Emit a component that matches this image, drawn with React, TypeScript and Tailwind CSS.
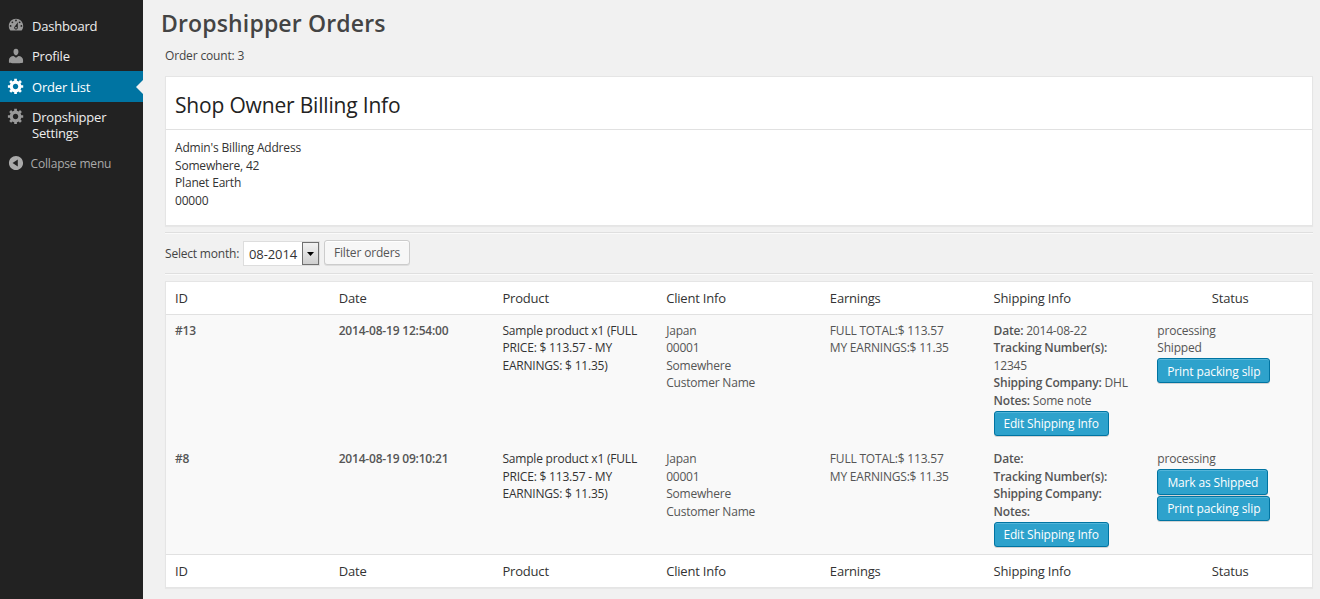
import React from 'react';

const GEAR =
  'M18 12h-2.18c-.17.7-.44 1.35-.81 1.93l1.54 1.54-2.1 2.1-1.54-1.54c-.58.36-1.23.63-1.91.79V19H8v-2.18c-.68-.16-1.33-.43-1.91-.79l-1.54 1.54-2.12-2.12 1.54-1.54c-.36-.58-.63-1.23-.79-1.91H1V9.03h2.17c.16-.7.44-1.35.8-1.94L2.43 5.55l2.1-2.1 1.54 1.54c.58-.37 1.24-.64 1.93-.81V2h3v2.18c.68.16 1.33.43 1.91.79l1.54-1.54 2.12 2.12-1.54 1.54c.36.59.64 1.24.8 1.94H18V12zm-8.5 1.5c1.66 0 3-1.34 3-3s-1.34-3-3-3-3 1.34-3 3 1.34 3 3 3z';
const DASH =
  'M3.76 16h12.48c1.1-1.37 1.76-3.11 1.76-5 0-4.42-3.58-8-8-8s-8 3.58-8 8c0 1.89.66 3.63 1.76 5zM10 4c.55 0 1 .45 1 1s-.45 1-1 1-1-.45-1-1 .45-1 1-1zM6 6c.55 0 1 .45 1 1s-.45 1-1 1-1-.45-1-1 .45-1 1-1zm8 0c.55 0 1 .45 1 1s-.45 1-1 1-1-.45-1-1 .45-1 1-1zm-5.370 5.550L12 7v6c0 1.100-.9 2-2 2s-2-.9-2-2c0-.57.24-1.080.63-1.450zM4 10c.55 0 1 .45 1 1s-.45 1-1 1-1-.45-1-1 .45-1 1-1zm12 0c.55 0 1 .45 1 1s-.45 1-1 1-1-.45-1-1 .45-1 1-1zm-5 3c0-.55-.45-1-1-1s-1 .45-1 1 .45 1 1 1 1-.45 1-1z';
const USER =
  'M10 9.250c-2.270 0-2.730-3.440-2.730-3.440C7 4.020 7.820 2 9.970 2c2.160 0 2.980 2.020 2.710 3.810 0 0-.41 3.440-2.680 3.440zm0 2.570L12.720 10c2.900 0 5.120 2.130 5.120 4.330v3.190s-4.250.63-7.840.63c-3.650 0-7.840-.63-7.840-.63v-3.190c0-2.250 2.240-4.280 5.070-4.280z';
const COLLAPSE =
  'M10 2.160c4.330 0 7.840 3.510 7.840 7.840s-3.510 7.840-7.840 7.840S2.160 14.330 2.160 10 5.710 2.160 10 2.160zm2 11.720V6.120L6.180 9.970z';

function Icon({ d, className = '' }: { d: string; className?: string }) {
  return (
    <svg viewBox="0 0 20 20" className={`size-[18px] shrink-0 fill-current ${className}`}>
      <path fillRule="evenodd" d={d} />
    </svg>
  );
}

function Button({ children, className = '' }: { children: React.ReactNode; className?: string }) {
  return (
    <button
      className={`block rounded-[3px] border border-[#0074a2] bg-[#2ea2cc] text-center text-[12px] whitespace-nowrap text-white shadow-[inset_0_1px_0_rgba(120,200,230,0.5),0_1px_0_rgba(0,0,0,0.15)] ${className}`}
    >
      {children}
    </button>
  );
}

const COLUMNS = ['ID', 'Date', 'Product', 'Client Info', 'Earnings', 'Shipping Info'];

function Headings() {
  return (
    <div className="grid h-[32px] grid-cols-7 bg-white text-[13px] leading-[33px] tracking-[-0.19px] text-[#333]">
      {COLUMNS.map((c) => (
        <div key={c} className="pl-[9px]">{c}</div>
      ))}
      <div className="text-center">Status</div>
    </div>
  );
}

type Order = {
  id: string;
  date: string;
  shipDate?: string;
  tracking?: string;
  company?: string;
  notes?: string;
  shipped: boolean;
};

const ORDERS: Order[] = [
  { id: '#13', date: '2014-08-19 12:54:00', shipDate: '2014-08-22', tracking: '12345', company: 'DHL', notes: 'Some note', shipped: true },
  { id: '#8', date: '2014-08-19 09:10:21', shipped: false },
];

function OrderRow({ o }: { o: Order }) {
  return (
    <div
      className={`grid grid-cols-7 text-[12px] leading-[17.5px] tracking-[-0.2px] text-[#555] *:pl-[9px] ${o.shipped ? 'h-[128px] pt-[6.6px]' : 'h-[111px] pt-[7.1px]'}`}
    >
      <div className="font-semibold">{o.id}</div>
      <div className="font-semibold">{o.date}</div>
      <div className="whitespace-nowrap text-[#333]">
        Sample product x1 (FULL<br />PRICE: $ 113.57 - MY<br />EARNINGS: $ 11.35)
      </div>
      <div>Japan<br />00001<br />Somewhere<br />Customer Name</div>
      <div className="whitespace-nowrap">FULL TOTAL:$ 113.57<br />MY EARNINGS:$ 11.35</div>
      <div className="whitespace-nowrap">
        <b className="font-semibold">Date:</b> {o.shipDate}<br />
        <b className="font-semibold">Tracking Number(s):</b><br />
        {o.tracking && <>{o.tracking}<br /></>}
        <b className="font-semibold">Shipping Company:</b> {o.company}<br />
        <b className="font-semibold">Notes:</b> {o.notes}
        <Button className="mt-[1.9px] h-[25px] w-[115px] leading-[24px] tracking-[-0.15px]">Edit Shipping Info</Button>
      </div>
      <div>
        processing
        {o.shipped ? (
          <div>Shipped</div>
        ) : (
          <Button className="mt-[1.4px] mb-px h-[26px] w-[111px] pt-px leading-[24px] tracking-[-0.15px]">Mark as Shipped</Button>
        )}
        <Button className={`h-[25px] w-[113px] tracking-[-0.1px] ${o.shipped ? 'mt-[1.4px] pt-px leading-[24px]' : 'leading-[24px]'}`}>
          Print packing slip
        </Button>
      </div>
    </div>
  );
}

export default function App() {
  return (
    <div className="flex h-[599px] w-[1320px] overflow-hidden bg-[#f1f1f1] font-['Open_Sans',sans-serif] text-[13px] text-[#444]">
      <nav className="w-[143px] shrink-0 bg-[#222] pt-[11px] text-[13px] tracking-[-0.2px] text-[#eee]">
        <div className="flex h-[30px] items-center gap-[7px] pl-[7px]">
          <Icon d={DASH} className="-mt-[2px] text-[#999]" />
          <span className="pt-px">Dashboard</span>
        </div>
        <div className="flex h-[30px] items-center gap-[7px] pl-[7px]">
          <Icon d={USER} className="text-[#999]" />
          <span className="pt-px">Profile</span>
        </div>
        <div className="flex h-[31px] items-center gap-[7px] bg-[#0074a2] pl-[7px] text-white">
          <Icon d={GEAR} className="-mt-px" />
          <span className="pt-[2px]">Order List</span>
          <svg viewBox="0 0 7 14" className="ml-auto h-[14px] w-[7px] fill-[#f1f1f1]">
            <path d="M7 0v14L0 7z" />
          </svg>
        </div>
        <div className="flex h-[46px] gap-[7px] pt-[7px] pl-[7px] leading-[16px]">
          <Icon d={GEAR} className="-mt-[2px] text-[#999]" />
          <span>Dropshipper<br />Settings</span>
        </div>
        <div className="flex h-[30px] items-center gap-[5.5px] pl-[7px] text-[12px] tracking-[-0.17px] text-[#aaa]">
          <Icon d={COLLAPSE} />
          <span className="pt-px">Collapse menu</span>
        </div>
      </nav>

      <main className="w-[1170px] shrink-0 pl-[22px]">
        <h1 className="-ml-[4px] pt-[8px] text-[23px] leading-[30px] font-semibold tracking-[0.15px]">Dropshipper Orders</h1>
        <p className="mt-[9px] text-[12px] leading-[18px] tracking-[-0.16px]">Order count: 3</p>

        <section className="mt-[11px] h-[150px] border border-[#e5e5e5] bg-white shadow-[0_1px_1px_rgba(0,0,0,0.04)]">
          <h2 className="h-[53px] border-b border-[#e1e1e1] pl-[9px] text-[21px] leading-[56px] tracking-[-0.18px] text-[#222]">Shop Owner Billing Info</h2>
          <p className="pt-[9px] pl-[9px] text-[12px] leading-[17.6px] tracking-[-0.18px] text-[#333]">
            Admin's Billing Address<br />Somewhere, 42<br />Planet Earth<br />00000
          </p>
        </section>

        <div className="mt-[6px] flex h-[42px] items-center border-y border-[#dfdfdf] shadow-[inset_0_1px_0_#fafafa,0_1px_0_#fafafa]">
          <label className="w-[74px] shrink-0 pt-[2px] text-[12px] tracking-[-0.2px] whitespace-nowrap">Select month:</label>
          <div className="mt-px ml-[4px] flex h-[25px] w-[77px] shrink-0 justify-between border border-[#ddd] bg-white text-[13px] leading-[24px] tracking-[-0.1px] text-[#333]">
            <span className="pl-[5px]">08-2014</span>
            <span className="flex w-[17px] shrink-0 items-center justify-center border border-[#707070] bg-linear-to-b from-[#f2f2f2] to-[#cfcfcf]">
              <svg viewBox="0 0 7 4" className="h-[4px] w-[7px] fill-black"><path d="M0 0h7L3.500 4z" /></svg>
            </span>
          </div>
          <button className="-mt-px ml-[4px] h-[25px] w-[86px] rounded-[3px] border border-[#ccc] bg-[#f7f7f7] text-[12px] leading-[24px] tracking-[-0.16px] text-[#555] shadow-[inset_0_1px_0_#fff,0_1px_0_rgba(0,0,0,0.08)]">
            Filter orders
          </button>
        </div>

        <section className="mt-[7px] border border-[#e5e5e5] bg-[#f9f9f9] shadow-[0_1px_1px_rgba(0,0,0,0.04)]">
          <div className="border-b border-[#e1e1e1]"><Headings /></div>
          {ORDERS.map((o) => <OrderRow key={o.id} o={o} />)}
          <div className="border-t border-[#e1e1e1]"><Headings /></div>
        </section>
      </main>
    </div>
  );
}
